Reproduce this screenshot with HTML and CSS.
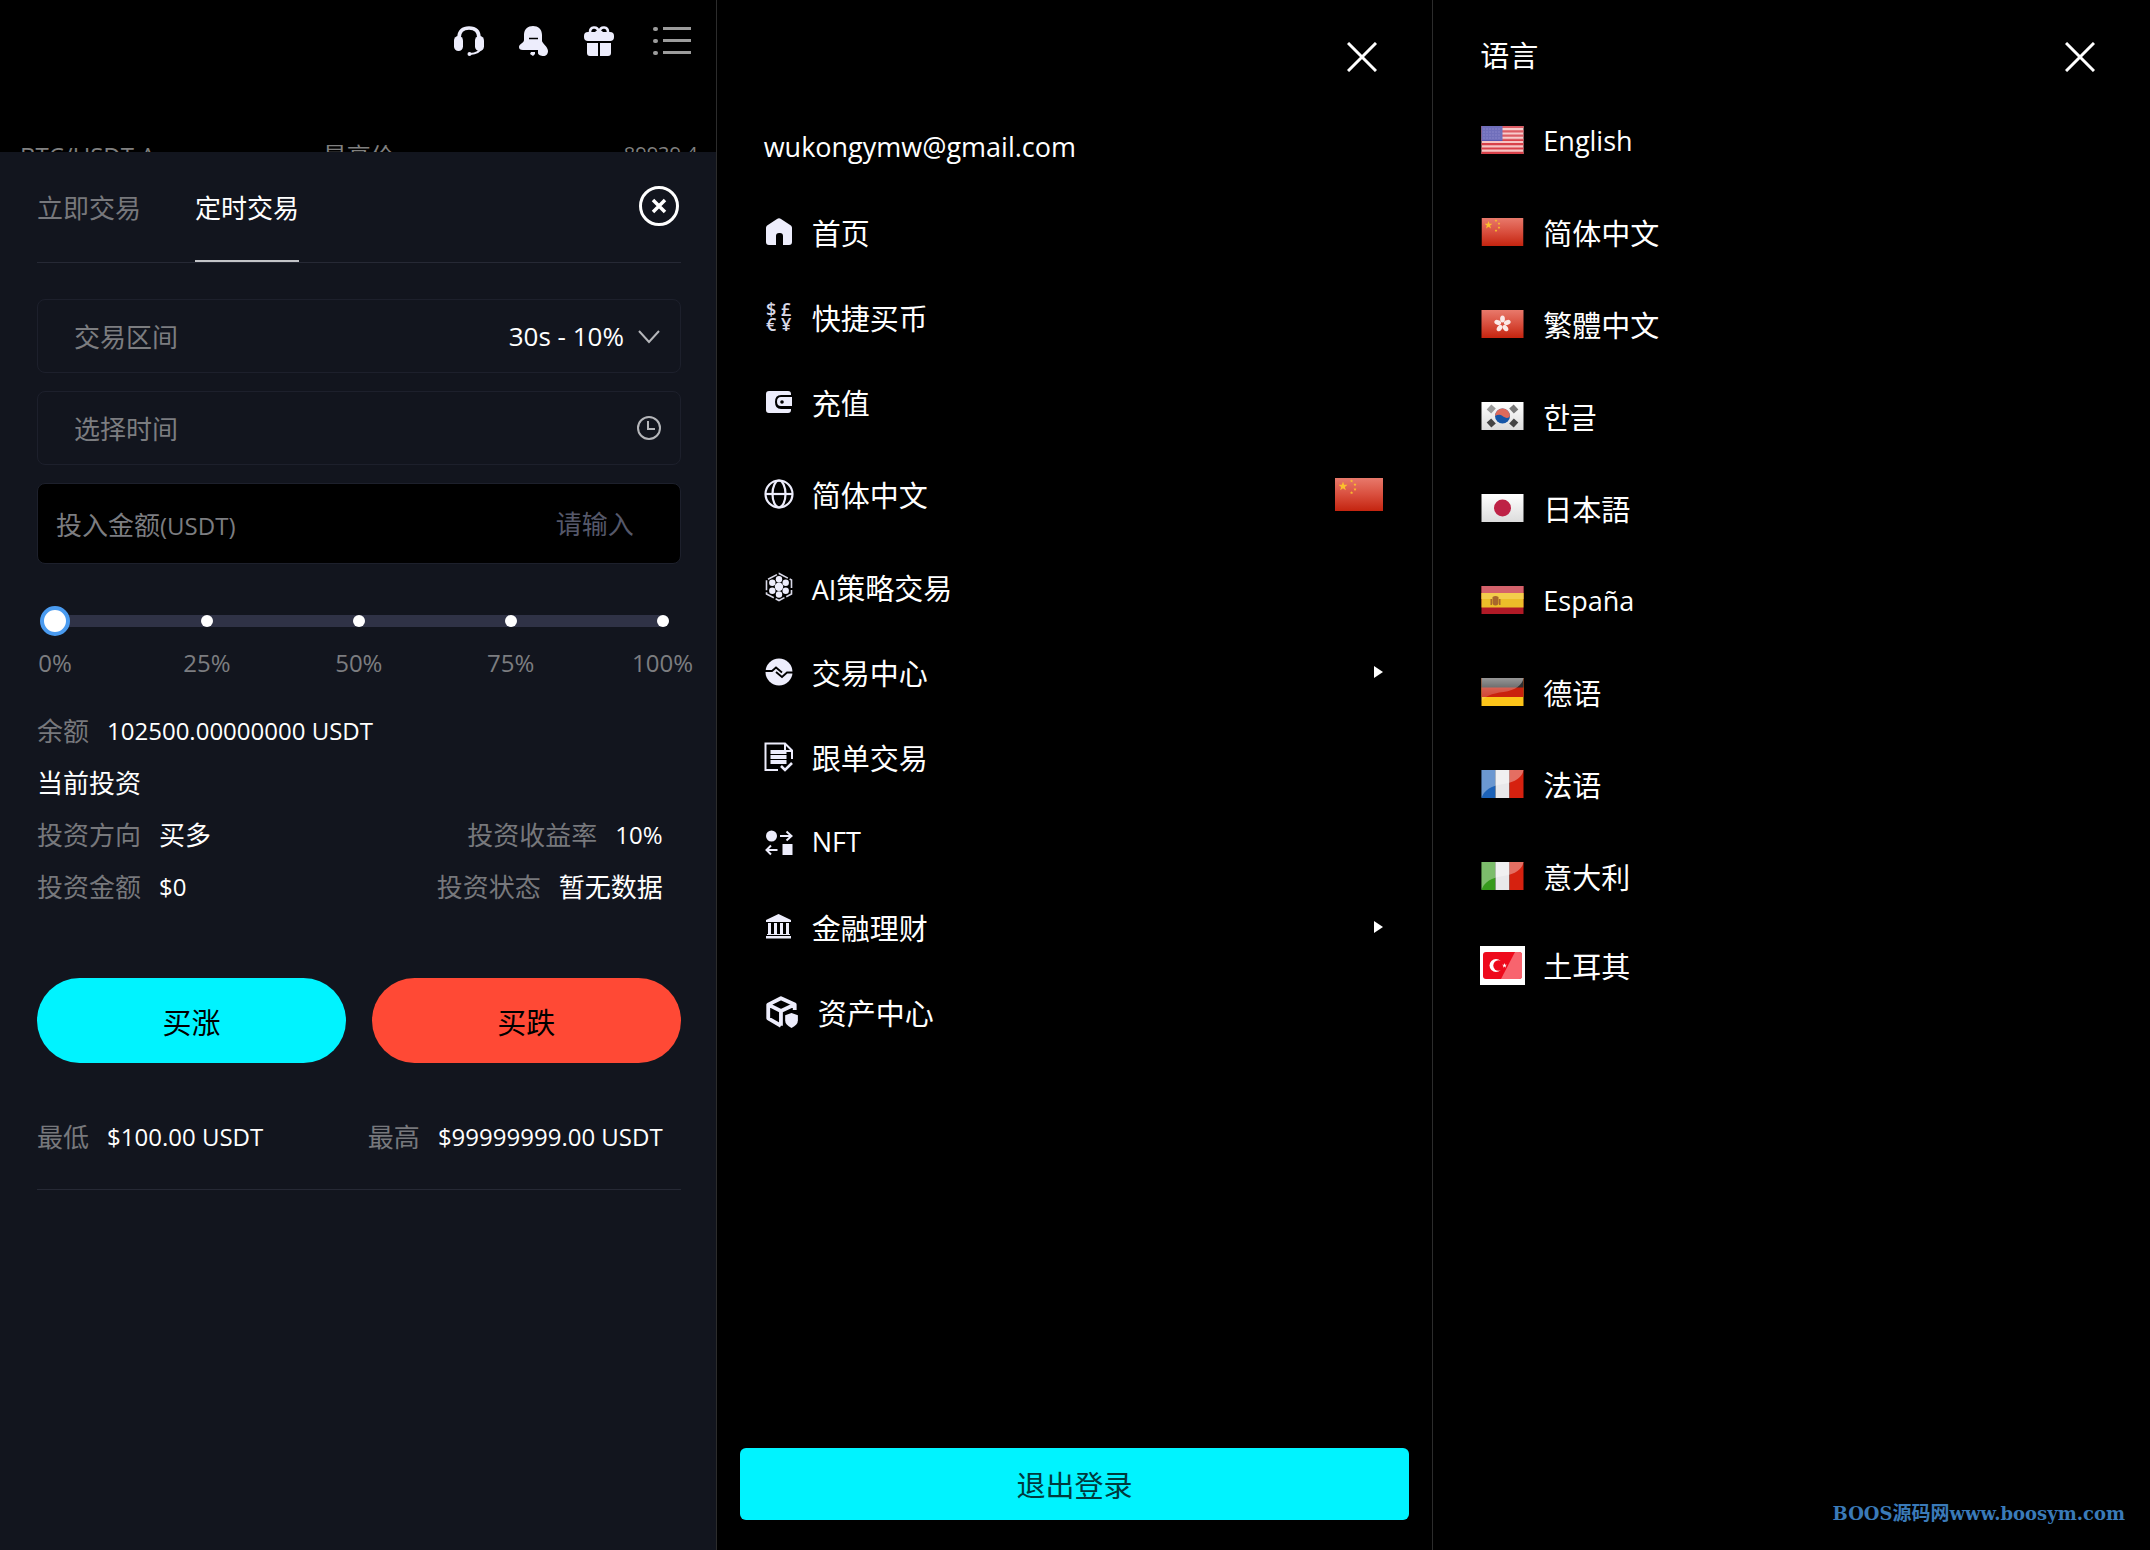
FILE: index.html
```html
<!DOCTYPE html>
<html lang="zh-CN">
<head>
  <meta charset="UTF-8" />
  <meta name="viewport" content="width=device-width, initial-scale=1.0"/>
  <title>定时交易</title>
  <link rel="stylesheet" href="styles.css">
</head>
<body>
  <!-- shared flag drawings -->
  <svg class="defs" aria-hidden="true">
    <defs>
      <linearGradient id="redFill" x1="0" y1="0" x2="0" y2="1">
        <stop offset="0" stop-color="#e8796b"/>
        <stop offset="0.5" stop-color="#d94f3e"/>
        <stop offset="1" stop-color="#c4240f"/>
      </linearGradient>
      <linearGradient id="whiteFill" x1="0" y1="0" x2="0" y2="1">
        <stop offset="0" stop-color="#ffffff"/>
        <stop offset="1" stop-color="#dcdcdc"/>
      </linearGradient>
      <linearGradient id="gloss" x1="0" y1="0" x2="0" y2="1">
        <stop offset="0" stop-color="#fff" stop-opacity="0.5"/>
        <stop offset="0.5" stop-color="#fff" stop-opacity="0.25"/>
        <stop offset="1" stop-color="#fff" stop-opacity="0.1"/>
      </linearGradient>
      <symbol id="star" viewBox="0 0 10 10">
        <path d="M5 0l1.2 3.5H10L7 5.7l1.1 3.6L5 7.1 1.9 9.3 3 5.7 0 3.5h3.8z"/>
      </symbol>
      <symbol id="flag-cn" viewBox="0 0 42 28">
        <rect width="42" height="28" fill="url(#redFill)"/>
        <g fill="#fbc02d">
          <use href="#star" x="3" y="3" width="8" height="8"/>
          <use href="#star" x="13" y="1" width="3" height="3"/>
          <use href="#star" x="16" y="4" width="3" height="3"/>
          <use href="#star" x="16" y="8" width="3" height="3"/>
          <use href="#star" x="13" y="11" width="3" height="3"/>
        </g>
      </symbol>
    </defs>
  </svg>

  <main class="screens">

    <!-- timed trade -->
    <section class="screen trade">
      <header class="topbar">
        <nav class="topbar-icons">
          <button class="icon-btn" aria-label="客服">
            <svg width="30" height="30" viewBox="0 0 30 30">
              <path d="M5 12C5 5 9 2 15 2s10 3 10 10" fill="none" stroke="#ededfc" stroke-width="3.6"/>
              <rect x="0" y="10" width="9" height="15" rx="4.5" fill="#ededfc"/>
              <rect x="21" y="10" width="9" height="15" rx="4.5" fill="#ededfc"/>
              <path d="M27 22c-1 4-5 5.500-11 6" fill="none" stroke="#ededfc" stroke-width="2"/>
              <circle cx="15.500" cy="28" r="2" fill="#ededfc"/>
            </svg>
          </button>
          <button class="icon-btn" aria-label="通知">
            <svg width="30" height="30" viewBox="0 0 30 30">
              <path d="M5 9C5 3 9 0 14 0s9 3 9 9v6c0 2 6 6 6 10 0 3-2 5-4.500 5S19 29 19 27v-3H4c-3 0-4-1-4-3 0-3 5-4 5-7z" fill="#ededfc"/>
              <path d="M10 12.500h9" stroke="#000" stroke-width="1.500"/>
              <path d="M12 26h4v2l-2 2-3-2z" fill="#ededfc"/>
            </svg>
          </button>
          <button class="icon-btn" aria-label="礼物">
            <svg width="30" height="30" viewBox="0 0 30 30">
              <path d="M15 6C13-1 6 1 6 6M15 6c2-7 9-5 9 0" fill="none" stroke="#ededfc" stroke-width="2.600"/>
              <path d="M10 8l5-4 5 4" fill="none" stroke="#ededfc" stroke-width="2"/>
              <rect x="0" y="6" width="30" height="9" rx="4" fill="#ededfc"/>
              <path d="M3 17h11v13H6c-2 0-3-1-3-3zM16 17h11v10c0 2-1 3-3 3h-8z" fill="#ededfc"/>
            </svg>
          </button>
          <button class="icon-btn icon-btn-menu" aria-label="菜单">
            <svg width="38" height="30" viewBox="0 0 38 30">
              <g fill="#9c9c9c">
                <rect x="0" y="1" width="5" height="4" rx="2"/><rect x="10" y="1" width="28" height="3"/>
                <rect x="0" y="13" width="5" height="4" rx="2"/><rect x="10" y="13" width="28" height="3"/>
                <rect x="0" y="25" width="5" height="4" rx="2"/><rect x="10" y="25" width="28" height="3"/>
              </g>
            </svg>
          </button>
        </nav>
        <div class="ticker">
          <span>BTC/USDT A</span>
          <span class="ticker-label">最高价</span>
          <span class="ticker-price">89939.4</span>
        </div>
      </header>

      <form class="sheet">
        <div class="tabs">
          <button type="button" class="tab">立即交易</button>
          <button type="button" class="tab tab-active">定时交易</button>
          <button type="button" class="icon-btn tabs-close" aria-label="关闭">
            <svg width="40" height="40" viewBox="0 0 40 40" fill="none" stroke="#fff" stroke-width="3">
              <circle cx="20" cy="20" r="18.500"/>
              <path d="M14 14l12 12M26 14L14 26" stroke-width="3.500"/>
            </svg>
          </button>
        </div>

        <div class="field">
          <label for="range">交易区间</label>
          <select id="range" class="field-select">
            <option>30s - 10%</option>
            <option>60s - 20%</option>
          </select>
          <svg width="24" height="20" viewBox="0 0 24 20" fill="none" stroke="#b5b6ba" stroke-width="2"><path d="M2 5l10 11L22 5"/></svg>
        </div>
        <div class="field">
          <label for="time">选择时间</label>
          <input id="time" class="field-input" type="text">
          <svg width="24" height="24" viewBox="0 0 24 24" fill="none" stroke="#b5b6ba" stroke-width="2"><circle cx="12" cy="12" r="11"/><path d="M11 5v8h7"/></svg>
        </div>
        <div class="field field-amount">
          <label for="amount">投入金额<span class="latin">(USDT)</span></label>
          <input id="amount" class="field-input" type="text" placeholder="请输入">
        </div>

        <div class="slider">
          <div class="slider-track"><i></i><i></i><i></i><i></i><i></i></div>
          <input class="slider-input" type="range" min="0" max="100" value="0" aria-label="仓位">
        </div>
        <div class="slider-marks">
          <span>0%</span><span>25%</span><span>50%</span><span>75%</span><span>100%</span>
        </div>

        <div class="info">
          <p><span class="key">余额</span><span class="latin">102500.00000000 USDT</span></p>
        </div>
        <div class="info">
          <p>当前投资</p>
        </div>
        <div class="info">
          <p><span class="key">投资方向</span><span>买多</span></p>
          <p><span class="key">投资收益率</span><span class="latin">10%</span></p>
        </div>
        <div class="info">
          <p><span class="key">投资金额</span><span class="latin">$0</span></p>
          <p><span class="key">投资状态</span><span>暂无数据</span></p>
        </div>

        <div class="actions">
          <button type="button" class="btn btn-up">买涨</button>
          <button type="button" class="btn btn-down">买跌</button>
        </div>

        <div class="info info-limits">
          <p><span class="key">最低</span><span class="latin">$100.00 USDT</span></p>
          <p><span class="key">最高</span><span class="latin">$99999999.00 USDT</span></p>
        </div>
      </form>
    </section>

    <!-- side menu -->
    <section class="screen menu">
      <header class="drawer-head">
        <button class="icon-btn" aria-label="关闭">
          <svg width="30" height="30" viewBox="0 0 30 30" stroke="#fff" stroke-width="3"><path d="M1 1l28 28M29 1L1 29"/></svg>
        </button>
      </header>
      <p class="account">wukongymw@gmail.com</p>
      <nav class="menu-list">
        <a class="menu-item" href="#">
          <svg class="menu-icon" viewBox="0 0 30 30" fill="#ededfc">
            <path d="M2 11c0-1 .5-2 1.500-2.700L13 2q2-1.300 4 0l9.500 6.300C27.500 9 28 10 28 11v14q0 3-3 3h-6v-9q0-3-3-3h-1q-3 0-3 3v9H5q-3 0-3-3z"/>
          </svg>
          <span>首页</span>
        </a>
        <a class="menu-item" href="#">
          <span class="menu-icon currency"><i>$</i><i>£</i><i>€</i><i>¥</i></span>
          <span>快捷买币</span>
        </a>
        <a class="menu-item" href="#">
          <svg class="menu-icon" viewBox="0 0 30 30">
            <path d="M5 4h19q3 0 3 3v1H17q-6 0-6 7t6 7h10v1q0 3-3 3H5q-3 0-3-3V7q0-3 3-3z" fill="#ededfc"/>
            <path d="M17 10h11v9H17q-4 0-4-4.500t4-4.500z" fill="#ededfc"/>
            <circle cx="18" cy="15" r="1.800" fill="#000"/>
          </svg>
          <span>充值</span>
        </a>
        <a class="menu-item menu-item-lang" href="#">
          <svg class="menu-icon" viewBox="0 0 30 30" fill="none" stroke="#ededfc" stroke-width="2.200">
            <circle cx="15" cy="15" r="13.500"/><ellipse cx="15" cy="15" rx="6.500" ry="13.500"/><path d="M1.500 15h27"/>
          </svg>
          <span>简体中文</span>
          <svg class="menu-flag" viewBox="0 0 42 28" preserveAspectRatio="none"><use href="#flag-cn"/></svg>
        </a>
        <a class="menu-item" href="#">
          <svg class="menu-icon" viewBox="0 0 30 30" fill="#ededfc">
            <path d="M15 1.500L27.500 8v14L15 28.500 2.500 22V8z" fill="none" stroke="#d9d9e8" stroke-width="1.600" stroke-dasharray="10 2"/>
            <circle cx="15" cy="14.800" r="4.200"/><circle cx="15" cy="7.200" r="3.200"/><circle cx="15" cy="22.500" r="3.200"/>
            <circle cx="8.300" cy="10.800" r="3.200"/><circle cx="21.700" cy="10.800" r="3.200"/><circle cx="8.300" cy="18.800" r="3.200"/><circle cx="21.700" cy="18.800" r="3.200"/>
          </svg>
          <span><span class="latin">AI</span>策略交易</span>
        </a>
        <a class="menu-item" href="#">
          <svg class="menu-icon" viewBox="0 0 30 30">
            <circle cx="15" cy="15" r="13.500" fill="#ededfc"/>
            <path d="M1 14h7l4-3.500 6 5M29 15.500h-6l-5 4.500-6-5" fill="none" stroke="#000" stroke-width="1.800"/>
          </svg>
          <span>交易中心</span>
          <svg class="menu-arrow" viewBox="0 0 9 12" fill="#fff"><path d="M0 0l9 6-9 6z"/></svg>
        </a>
        <a class="menu-item" href="#">
          <svg class="menu-icon" viewBox="0 0 30 30" fill="none" stroke="#ededfc" stroke-width="2">
            <path d="M14 28H1.500V1.500H21l7 7V17"/><path d="M21 2v7h7"/>
            <path d="M6.500 10h16M6.500 15h16M6.500 20h16" stroke-width="3.800"/>
            <path d="M17 24l4 4 7-7" stroke-width="2.600"/>
          </svg>
          <span>跟单交易</span>
        </a>
        <a class="menu-item" href="#">
          <svg class="menu-icon" viewBox="0 0 30 30" fill="#ededfc">
            <circle cx="7.500" cy="9" r="5.500"/><rect x="18.500" y="17" width="10" height="11"/>
            <path d="M16 9h11M22.500 4.500L27.500 9l-5 4.500M13.500 23h-11M7 18.500L2.500 23 7 27.500" fill="none" stroke="#ededfc" stroke-width="2"/>
          </svg>
          <span class="latin">NFT</span>
        </a>
        <a class="menu-item" href="#">
          <svg class="menu-icon" viewBox="0 0 30 30" fill="#ededfc">
            <path d="M14.500 2L27 8v2H2V8zM2 24h25v2.500H2z"/>
            <path d="M5.500 11v12M11.500 11v12M17.500 11v12M23.500 11v12" stroke="#ededfc" stroke-width="3"/>
            <path d="M3 22h23v1H3z"/>
          </svg>
          <span>金融理财</span>
          <svg class="menu-arrow" viewBox="0 0 9 12" fill="#fff"><path d="M0 0l9 6-9 6z"/></svg>
        </a>
        <a class="menu-item menu-item-wide" href="#">
          <svg class="menu-icon" viewBox="0 0 34 30">
            <path d="M29 13V8L16 2 4 8v13l12 7M4 8l12 6 13-6M16 14v14" fill="none" stroke="#ededfc" stroke-width="3.600" stroke-linejoin="round"/>
            <path d="M26 16l6 2v5q0 4-6 7-6-3-6-7v-5z" fill="#ededfc"/>
          </svg>
          <span>资产中心</span>
        </a>
      </nav>
      <button class="logout">退出登录</button>
    </section>

    <!-- language picker -->
    <section class="screen languages">
      <header class="drawer-head">
        <h1>语言</h1>
        <button class="icon-btn" aria-label="关闭">
          <svg width="30" height="30" viewBox="0 0 30 30" stroke="#fff" stroke-width="3"><path d="M1 1l28 28M29 1L1 29"/></svg>
        </button>
      </header>
      <nav class="lang-list">
        <a class="lang-item latin" href="#">
          <svg class="flag" viewBox="0 0 42 28">
            <rect width="42" height="28" fill="#f6c4c4"/>
            <path d="M0 1h42M0 5.300h42M0 9.600h42M0 13.900h42M0 18.200h42M0 22.500h42M0 26.800h42" stroke="#d8414a" stroke-width="2.200"/>
            <rect width="21" height="15" fill="#5856b0"/>
            <path d="M2 3h18M2 6h18M2 9h18M2 12h18" stroke="#8a88d0" stroke-width="1" stroke-dasharray="1 2"/>
            <rect width="42" height="14" fill="#fff" opacity="0.15"/>
          </svg>
          <span>English</span>
        </a>
        <a class="lang-item" href="#">
          <svg class="flag" viewBox="0 0 42 28"><use href="#flag-cn"/></svg>
          <span>简体中文</span>
        </a>
        <a class="lang-item" href="#" lang="zh-TW">
          <svg class="flag" viewBox="0 0 42 28">
            <rect width="42" height="28" fill="url(#redFill)"/>
            <g fill="#fbe9e7" transform="translate(21 14)">
              <ellipse cy="-5" rx="2.400" ry="3.500"/>
              <ellipse cy="-5" rx="2.400" ry="3.500" transform="rotate(72)"/>
              <ellipse cy="-5" rx="2.400" ry="3.500" transform="rotate(144)"/>
              <ellipse cy="-5" rx="2.400" ry="3.500" transform="rotate(216)"/>
              <ellipse cy="-5" rx="2.400" ry="3.500" transform="rotate(288)"/>
            </g>
          </svg>
          <span>繁體中文</span>
        </a>
        <a class="lang-item lang-ko" href="#" lang="ko">
          <svg class="flag" viewBox="0 0 42 28">
            <rect width="42" height="28" fill="url(#whiteFill)"/>
            <circle cx="21" cy="14" r="7.500" fill="#1556a8"/>
            <path d="M13.500 14a7.500 7.500 0 0 1 15 0c-1.500 3-5 2-7.500 0s-5-1-7.500 0z" fill="#dd6a5c"/>
            <g stroke-width="7">
              <path d="M7.500 5l4.500 4" stroke="#999"/><path d="M34.500 5l-4.500 4" stroke="#777"/>
              <path d="M7.500 23l4.500-4" stroke="#444"/><path d="M34.500 23l-4.500-4" stroke="#444"/>
            </g>
          </svg>
          <span>한글</span>
        </a>
        <a class="lang-item lang-ja" href="#" lang="ja">
          <svg class="flag" viewBox="0 0 42 28">
            <rect width="42" height="28" fill="url(#whiteFill)"/>
            <circle cx="21" cy="14" r="8.500" fill="#be2246"/>
          </svg>
          <span>日本語</span>
        </a>
        <a class="lang-item latin" href="#">
          <svg class="flag" viewBox="0 0 42 28">
            <rect width="42" height="28" fill="#b01a26"/>
            <rect width="42" height="7" fill="#d4626b"/>
            <rect y="7" width="42" height="14.500" fill="#ecbd29"/>
            <rect y="7" width="42" height="6" fill="#f3cd4c"/>
            <path d="M9 13h1.500v6H9zM17.500 13H19v6h-1.500zM11 11q3-2 6 0v6q0 2-3 2.500-3-.5-3-2.500z" fill="#a8662c"/>
          </svg>
          <span>España</span>
        </a>
        <a class="lang-item" href="#">
          <svg class="flag" viewBox="0 0 42 28">
            <rect width="42" height="28" fill="#fcc419"/>
            <rect width="42" height="19" fill="#c9210d"/>
            <rect width="42" height="9.500" fill="#303030"/>
            <path d="M0 0h42Q40 11 22 14 4 16 0 24z" fill="url(#gloss)"/>
          </svg>
          <span>德语</span>
        </a>
        <a class="lang-item" href="#">
          <svg class="flag" viewBox="0 0 42 28">
            <rect width="14" height="28" fill="#1c62b8"/>
            <rect x="14" width="14" height="28" fill="#e8e8ea"/>
            <rect x="28" width="14" height="28" fill="#d6210f"/>
            <path d="M0 0h42Q40 11 22 14 4 16 0 28z" fill="#fff" opacity="0.35"/>
          </svg>
          <span>法语</span>
        </a>
        <a class="lang-item" href="#">
          <svg class="flag" viewBox="0 0 42 28">
            <rect width="14" height="28" fill="#369a1c"/>
            <rect x="14" width="14" height="28" fill="#e8e8ea"/>
            <rect x="28" width="14" height="28" fill="#d6210f"/>
            <path d="M0 0h42Q40 11 22 14 4 16 0 28z" fill="#fff" opacity="0.35"/>
          </svg>
          <span>意大利</span>
        </a>
        <a class="lang-item" href="#">
          <svg class="flag flag-tr" viewBox="0 0 45 39">
            <rect width="45" height="39" fill="#fff"/>
            <rect x="3" y="6" width="39" height="27" rx="3" fill="#ee0a1c"/>
            <path d="M35 6h4q3 0 3 3v21q0 3-3 3H21z" fill="#f8646e"/>
            <circle cx="16" cy="19.500" r="6.500" fill="#fff"/><circle cx="18.500" cy="19.500" r="5.200" fill="#ee0a1c"/>
            <use href="#star" x="22" y="17" width="5" height="5" fill="#fff"/>
          </svg>
          <span>土耳其</span>
        </a>
      </nav>
      <footer class="site-mark">BOOS<span>源码网</span>www.boosym.com</footer>
    </section>

  </main>
</body>
</html>
```
FILE: styles.css
```css
* {
  box-sizing: border-box;
}

body {
  margin: 0;
  background: #000;
  color: #fff;
  font-family: "Open Sans", "Noto Sans CJK SC", sans-serif;
  font-size: 26px;
}

p, h1 {
  margin: 0;
}

a {
  color: inherit;
  text-decoration: none;
}

button, input, select {
  font: inherit;
  color: inherit;
  background: none;
  border: 0;
  padding: 0;
  margin: 0;
}

svg {
  display: block;
  flex: none;
}

.defs {
  position: absolute;
  width: 0;
  height: 0;
}

.screens {
  display: grid;
  grid-template-columns: repeat(3, 1fr);
  min-height: 100vh;
}

.screen {
  display: flex;
  flex-direction: column;
  border-right: 1px solid #2c2c2c;
}

.screen:last-child {
  border-right: 0;
}

.icon-btn {
  display: flex;
  cursor: pointer;
}

/* trade */
.topbar {
  height: 152px;
  overflow: hidden;
}

.topbar-icons {
  display: flex;
  justify-content: flex-end;
  gap: 35px;
  padding: 26px 25px 0 0;
}

.icon-btn-menu {
  margin-left: 4px;
}

.ticker {
  display: grid;
  grid-template-columns: 1fr auto 1fr;
  padding: 84px 18px 0 20px;
  font-size: 24px;
  line-height: 32px;
  color: #808080;
}

.ticker-price {
  font-size: 20px;
  line-height: 28px;
  text-align: right;
}

.sheet {
  flex: 1;
  padding: 0 35px 0 37px;
  background: #12151e;
}

.tabs {
  display: flex;
  gap: 54px;
  height: 111px;
  margin-bottom: 36px;
  border-bottom: 1px solid #262935;
}

.tab {
  padding-top: 2px;
  color: #77787c;
  border-bottom: 2px solid transparent;
  cursor: pointer;
}

.tab-active {
  color: #fff;
  border-color: #c3c4c8;
}

.tabs-close {
  margin: 34px 2px 0 auto;
  align-self: flex-start;
}

.field {
  display: flex;
  align-items: center;
  height: 74px;
  margin-bottom: 18px;
  padding: 0 19px 0 36px;
  border: 1px solid #1d202c;
  border-radius: 8px;
  color: #7c7d80;
}

.field-select {
  margin-left: auto;
  margin-right: 12px;
  appearance: none;
  color: #fff;
}

.field-input {
  flex: 1;
  min-width: 0;
  text-align: right;
}

.field-input::placeholder {
  color: #55586a;
  opacity: 1;
}

.field-amount {
  height: 81px;
  margin-bottom: 42px;
  padding: 0 46px 0 18px;
  background: #000;
}

.latin {
  font-size: 24px;
}

.slider {
  display: grid;
  align-items: center;
  padding: 0 3px;
}

.slider-track {
  grid-area: 1 / 1;
  display: flex;
  justify-content: space-between;
  margin: 0 9px;
  background: #2f3246;
  border-radius: 6px;
}

.slider-track i {
  width: 12px;
  height: 12px;
  border-radius: 50%;
  background: #fff;
}

.slider-input {
  grid-area: 1 / 1;
  appearance: none;
  width: 100%;
  height: 30px;
}

.slider-input::-webkit-slider-thumb {
  appearance: none;
  width: 30px;
  height: 30px;
  border: 4px solid #4a9bf0;
  border-radius: 50%;
  background: #fff;
}

.slider-marks {
  display: flex;
  justify-content: space-between;
  margin: 10px -22px 25px;
  color: #7c7d80;
  font-size: 24px;
  line-height: 34px;
}

.slider-marks span {
  width: 80px;
  text-align: center;
}

.info {
  display: flex;
  justify-content: space-between;
  padding-right: 18px;
  line-height: 52px;
}

.info p {
  display: flex;
  gap: 18px;
}

.key {
  color: #77787c;
}

.actions {
  display: flex;
  gap: 26px;
  margin: 65px 0 48px;
}

.btn {
  flex: 1;
  height: 85px;
  border-radius: 43px;
  color: #000;
  font-size: 29px;
  cursor: pointer;
}

.btn-up {
  background: #00f3ff;
}

.btn-down {
  background: #ff4935;
}

.info-limits {
  padding-bottom: 26px;
  border-bottom: 1px solid #262935;
}

/* drawers */
.menu, .languages {
  font-size: 29px;
}

.menu .latin, .languages .latin, .account {
  font-size: 27px;
}

.drawer-head {
  display: flex;
  align-items: center;
  height: 95px;
  padding: 18px 55px 0 47px;
}

.drawer-head h1 {
  padding-bottom: 5px;
  font-size: 29px;
  font-weight: 400;
}

.drawer-head .icon-btn {
  margin-left: auto;
}

.account {
  padding: 27px 47px 17px;
  line-height: 50px;
}

.menu-item {
  display: flex;
  align-items: center;
  gap: 18px;
  height: 85px;
  padding: 0 49px 0 47px;
}

.menu-item-lang {
  height: 100px;
}

.menu-icon {
  width: 30px;
  height: 30px;
}

.menu-item-wide .menu-icon {
  width: 36px;
  height: 32px;
}

.currency {
  display: grid;
  grid-template-columns: 1fr 1fr;
  color: #d9d9e8;
  font-size: 18px;
  font-weight: 600;
  line-height: 15px;
  text-align: center;
}

.currency i {
  font-style: normal;
}

.menu-flag {
  width: 48px;
  height: 33px;
  margin-left: auto;
}

.menu-arrow {
  width: 9px;
  height: 12px;
  margin-left: auto;
}

.logout {
  height: 72px;
  margin: auto 23px 30px;
  border-radius: 6px;
  background: #00f3ff;
  color: #003a3d;
  cursor: pointer;
}

.lang-list {
  margin-top: -1px;
}

.lang-item {
  display: flex;
  align-items: center;
  gap: 18px;
  height: 92px;
  padding: 0 47px;
}

.lang-item:last-child {
  height: 86px;
}

.lang-ko {
  font-family: "Noto Sans CJK KR", sans-serif;
}

.lang-ja {
  font-family: "Noto Sans CJK JP", sans-serif;
}

.flag {
  width: 45px;
  height: 28px;
}

.flag-tr {
  height: 39px;
}

.site-mark {
  margin: auto 25px 23px;
  color: #3a7ab8;
  font-family: "DejaVu Serif", "Noto Sans CJK SC", serif;
  font-size: 18px;
  font-weight: 700;
  line-height: 26px;
  text-align: right;
}

.site-mark span {
  font-size: 19px;
}
```
